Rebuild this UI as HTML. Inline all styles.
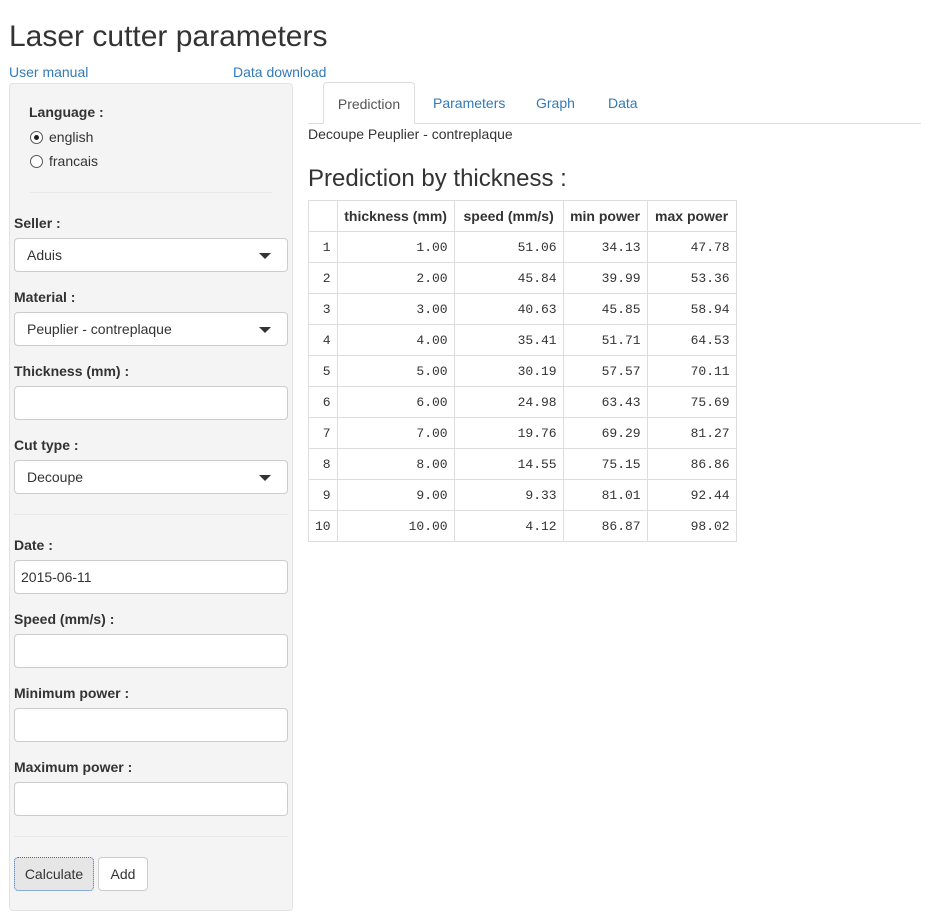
<!DOCTYPE html>
<html><head><meta charset="utf-8"><style>
*{box-sizing:border-box;margin:0;padding:0}
body{width:927px;height:917px;background:#fff;font-family:"Liberation Sans",sans-serif;color:#333;position:relative;overflow:hidden;font-size:14px}
.a{position:absolute;white-space:nowrap}
h1{position:absolute;left:9px;top:20px;font-size:30px;font-weight:normal}
.lnk{color:#337ab7;font-size:14px}
.panel{position:absolute;left:9px;top:83px;width:284px;height:828px;background:#f4f4f4;border:1px solid #e3e3e3;border-radius:4px}
.lbl{position:absolute;left:14px;font-weight:bold;font-size:14px;color:#333}
.inp{position:absolute;left:14px;width:274px;height:34px;background:#fff;border:1px solid #ccc;border-radius:4px;font-size:14px;padding:8px 12px}
.sel:after{content:"";position:absolute;right:16px;top:14px;border-left:6px solid transparent;border-right:6px solid transparent;border-top:6px solid #333}
.hr{position:absolute;left:30px;width:242px;height:1px;background:#e8e8e8}
.radio{position:absolute;left:30px;width:13px;height:13px;border:1px solid #555;border-radius:50%;background:#fff}
table{position:absolute;left:308px;top:200px;border-collapse:collapse;font-family:"Liberation Mono",monospace;font-size:13px;color:#333}
td,th{border:1px solid #ddd;height:31px;padding:0 6px;text-align:right}
th{font-family:"Liberation Sans",sans-serif;font-weight:bold;font-size:14px;text-align:center;padding:0;white-space:nowrap}
</style></head><body>
<h1>Laser cutter parameters</h1>
<div class="a lnk" style="left:9px;top:64px">User manual</div>
<div class="a lnk" style="left:233px;top:64px">Data download</div>
<div class="panel"></div>
<div class="lbl" style="left:29px;top:104px">Language :</div>
<div class="radio" style="top:131px"><div style="position:absolute;left:3px;top:3px;width:5px;height:5px;border-radius:50%;background:#222"></div></div>
<div class="a" style="left:49px;top:129px">english</div>
<div class="radio" style="top:155px"></div>
<div class="a" style="left:49px;top:153px">francais</div>
<div class="hr" style="top:192px"></div>
<div class="lbl" style="top:215px">Seller :</div>
<div class="inp sel" style="top:238px">Aduis</div>
<div class="lbl" style="top:289px">Material :</div>
<div class="inp sel" style="top:312px">Peuplier - contreplaque</div>
<div class="lbl" style="top:363px">Thickness (mm) :</div>
<div class="inp" style="top:386px"></div>
<div class="lbl" style="top:437px">Cut type :</div>
<div class="inp sel" style="top:460px">Decoupe</div>
<div class="hr" style="top:514px;left:14px;width:274px"></div>
<div class="lbl" style="top:537px">Date :</div>
<div class="inp" style="top:560px;padding-left:6px">2015-06-11</div>
<div class="lbl" style="top:611px">Speed (mm/s) :</div>
<div class="inp" style="top:634px"></div>
<div class="lbl" style="top:685px">Minimum power :</div>
<div class="inp" style="top:708px"></div>
<div class="lbl" style="top:759px">Maximum power :</div>
<div class="inp" style="top:782px"></div>
<div class="hr" style="top:836px;left:14px;width:274px"></div>
<div class="a" style="left:14px;top:857px;width:80px;height:34px;background:#e6e6e6;border:1px dotted #2a6fd6;border-radius:4px;text-align:center;line-height:32px">Calculate</div>
<div class="a" style="left:98px;top:857px;width:50px;height:34px;background:#fff;border:1px solid #ccc;border-radius:4px;text-align:center;line-height:32px">Add</div>

<div class="a" style="left:308px;top:123px;width:613px;height:1px;background:#ddd"></div>
<div class="a" style="left:323px;top:82px;width:92px;height:42px;background:#fff;border:1px solid #ddd;border-bottom-color:#fff;border-radius:4px 4px 0 0;text-align:center;line-height:42px;color:#555">Prediction</div>
<div class="a lnk" style="left:433px;top:95px">Parameters</div>
<div class="a lnk" style="left:536px;top:95px">Graph</div>
<div class="a lnk" style="left:608px;top:95px">Data</div>
<div class="a" style="left:308px;top:126px">Decoupe Peuplier - contreplaque</div>
<div class="a" style="left:308px;top:165px;font-size:24px">Prediction by thickness :</div>
<table>
<tr><th style="width:27px"></th><th style="width:117px">thickness (mm)</th><th style="width:109px">speed (mm/s)</th><th style="width:84px">min power</th><th style="width:89px">max power</th></tr>
<tr><td>1</td><td>1.00</td><td>51.06</td><td>34.13</td><td>47.78</td></tr>
<tr><td>2</td><td>2.00</td><td>45.84</td><td>39.99</td><td>53.36</td></tr>
<tr><td>3</td><td>3.00</td><td>40.63</td><td>45.85</td><td>58.94</td></tr>
<tr><td>4</td><td>4.00</td><td>35.41</td><td>51.71</td><td>64.53</td></tr>
<tr><td>5</td><td>5.00</td><td>30.19</td><td>57.57</td><td>70.11</td></tr>
<tr><td>6</td><td>6.00</td><td>24.98</td><td>63.43</td><td>75.69</td></tr>
<tr><td>7</td><td>7.00</td><td>19.76</td><td>69.29</td><td>81.27</td></tr>
<tr><td>8</td><td>8.00</td><td>14.55</td><td>75.15</td><td>86.86</td></tr>
<tr><td>9</td><td>9.00</td><td>9.33</td><td>81.01</td><td>92.44</td></tr>
<tr><td>10</td><td>10.00</td><td>4.12</td><td>86.87</td><td>98.02</td></tr>
</table>
</body></html>
